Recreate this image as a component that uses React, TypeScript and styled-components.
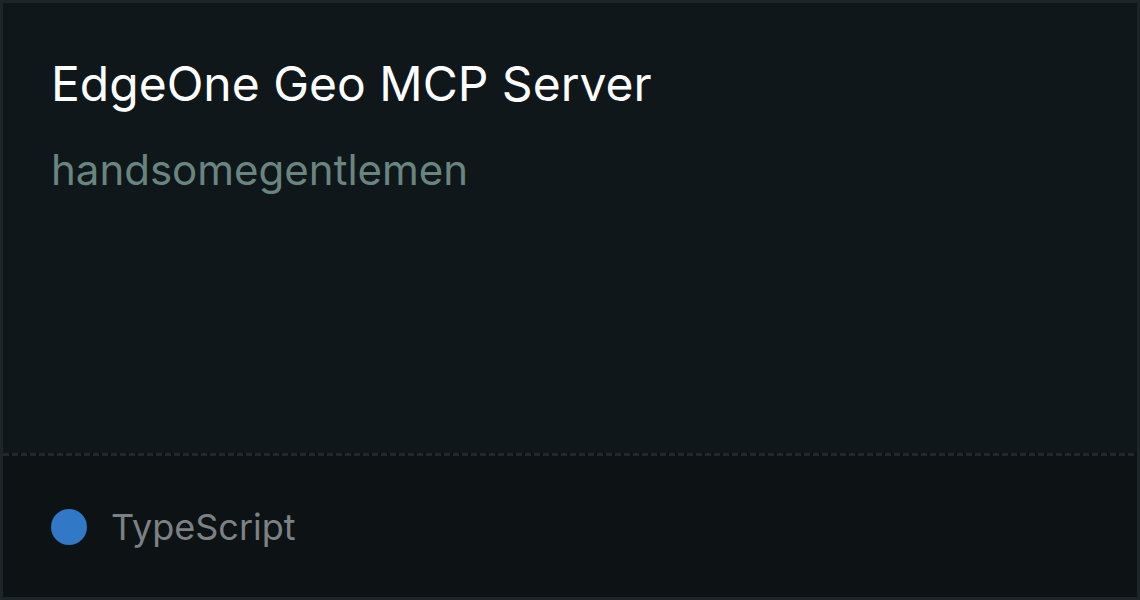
import styled, { createGlobalStyle } from "styled-components";

const GlobalStyle = createGlobalStyle`
  *, *::before, *::after {
    box-sizing: border-box;
    margin: 0;
    padding: 0;
  }
  html, body {
    height: 100%;
    background: #0d1215;
  }
  body {
    font-family: Inter, "Noto Sans", sans-serif;
  }
`;

function App() {
  return (
    <>
      <GlobalStyle />
      <Card>
        <Main>
          <Title>EdgeOne Geo MCP Server</Title>
          <Owner>handsomegentlemen</Owner>
        </Main>
        <Footer>
          <Language>
            <Dot color="#3178c6" />
            TypeScript
          </Language>
        </Footer>
      </Card>
    </>
  );
}

const Card = styled.div`
  width: 1140px;
  height: 600px;
  border: 3px solid #1e2528;
  display: flex;
  flex-direction: column;
  background: #10171a;
`;

const Main = styled.div`
  flex: 1;
  padding: 52px 48px 0;
  display: flex;
  flex-direction: column;
  gap: 31px;
`;

const Title = styled.h1`
  font-size: 48px;
  font-weight: 400;
  line-height: 58px;
  color: #ffffff;
`;

const Owner = styled.div`
  font-size: 42px;
  line-height: 51px;
  color: #6a8580;
`;

const Footer = styled.div`
  height: 144px;
  padding: 3px 48px 0;
  background:
    repeating-linear-gradient(90deg, #22292c 0 6px, transparent 6px 9px) top left / 100% 3px no-repeat,
    #0d1215;
  display: flex;
  align-items: center;
`;

const Language = styled.div`
  display: flex;
  align-items: center;
  gap: 24px;
  font-size: 36px;
  color: #7d8185;
`;

const Dot = styled.span<{ color: string }>`
  width: 36px;
  height: 36px;
  border-radius: 50%;
  background: ${(p) => p.color};
`;

export default App;
